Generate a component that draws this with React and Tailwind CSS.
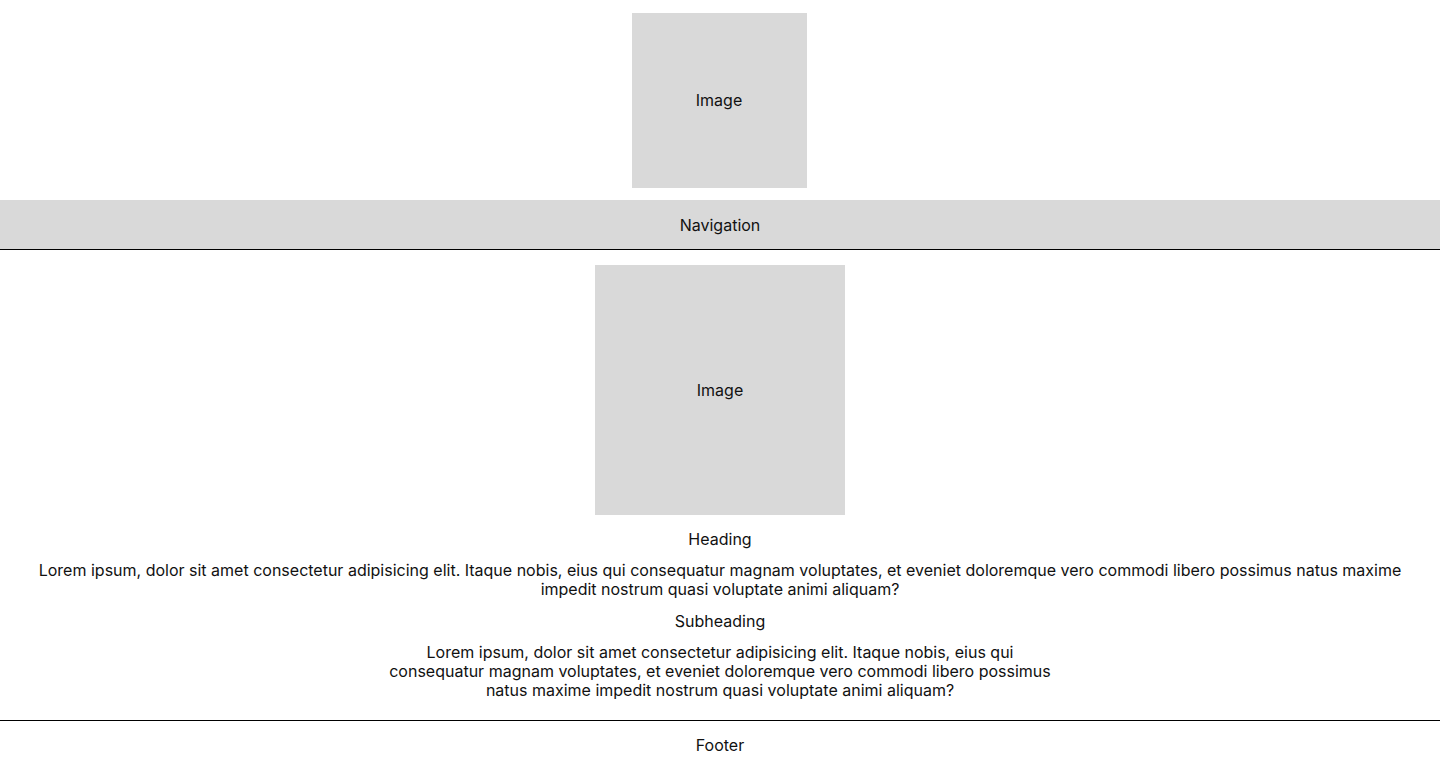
export default function App() {
  return (
    <div className="min-h-screen bg-white text-[#111] font-['Inter',sans-serif] text-base leading-[19px]">
      <header className="flex flex-col items-center pt-[13px]">
        <div className="w-[175px] h-[175px] -translate-x-px bg-[#d9d9d9] flex items-center justify-center">Image</div>
        <nav className="mt-3 w-full h-[50px] pt-px bg-[#d9d9d9] border-b border-black flex items-center justify-center">
          Navigation
        </nav>
      </header>

      <main className="flex flex-col items-center px-8 pt-[15px] pb-5 text-center">
        <div className="w-[250px] h-[250px] bg-[#d9d9d9] flex items-center justify-center">Image</div>
        <h1 className="mt-[15px]">Heading</h1>
        <p className="mt-3">
          Lorem ipsum, dolor sit amet consectetur adipisicing elit. Itaque nobis, eius qui consequatur magnam voluptates, et
          eveniet doloremque vero commodi libero possimus natus maxime impedit nostrum quasi voluptate animi aliquam?
        </p>
        <h2 className="mt-[13px]">Subheading</h2>
        <p className="mt-3 max-w-2xl">
          Lorem ipsum, dolor sit amet consectetur adipisicing elit. Itaque nobis, eius qui consequatur magnam voluptates, et
          eveniet doloremque vero commodi libero possimus natus maxime impedit nostrum quasi voluptate animi aliquam?
        </p>
      </main>

      <footer className="border-t border-black pt-[15px] pb-4 text-center">Footer</footer>
    </div>
  );
}
